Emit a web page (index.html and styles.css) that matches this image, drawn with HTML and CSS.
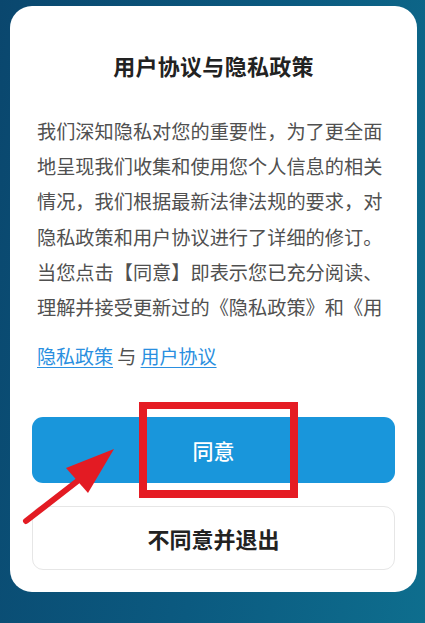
FILE: index.html
```html
<!DOCTYPE html>
<html lang="zh-CN">
<head>
<meta charset="utf-8">
<link rel="stylesheet" href="styles.css">
</head>
<body>
<div class="screen">
  <div class="card">
    <h1 class="title">用户协议与隐私政策</h1>
    <div class="content">我们深知隐私对您的重要性，为了更全面地呈现我们收集和使用您个人信息的相关情况，我们根据最新法律法规的要求，对隐私政策和用户协议进行了详细的修订。当您点击【同意】即表示您已充分阅读、理解并接受更新过的《隐私政策》和《用户协议》，我们将严格按照上述协议为您提供服务。</div>
    <div class="links"><a class="link">隐私政策</a> 与 <a class="link">用户协议</a></div>
    <div class="actions">
      <button class="btn btn-primary">同意</button>
      <button class="btn btn-secondary">不同意并退出</button>
    </div>
  </div>
  <div class="highlight"></div>
  <svg class="arrow" width="425" height="623" viewBox="0 0 425 623">
    <line x1="26" y1="521" x2="84" y2="476" stroke="#e31b23" stroke-width="6" stroke-linecap="round"/>
    <polygon points="114,449 66,468 88,493" fill="#e31b23"/>
  </svg>
</div>
</body>
</html>
```
FILE: styles.css
```css
html, body {
  margin: 0;
  padding: 0;
}
body {
  width: 425px;
  height: 623px;
  overflow: hidden;
  font-family: "Noto Sans CJK SC", "Noto Sans", sans-serif;
}
.screen {
  position: relative;
  width: 425px;
  height: 623px;
  background: linear-gradient(100deg, #0a476e 0%, #0b5a80 55%, #0e6e8e 100%);
  padding: 6px 8px 0 10px;
  box-sizing: border-box;
}
.card {
  width: 407px;
  height: 586px;
  background: #fff;
  border-radius: 22px;
  box-sizing: border-box;
  padding: 44px 22px 22px 22px;
  display: flex;
  flex-direction: column;
}
.title {
  margin: 0;
  text-align: center;
  font-size: 22px;
  line-height: 30px;
  font-weight: 700;
  color: #222;
  letter-spacing: 0.3px;
}
.content {
  margin: 34px 0 0 5px;
  width: 348px;
  height: 210px;
  overflow: hidden;
  font-size: 19.2px;
  line-height: 35.2px;
  color: #505050;
}
.links {
  margin: 18px 0 0 5px;
  font-size: 19px;
  line-height: 35px;
  color: #505050;
}
.link {
  color: #2a8fe0;
  text-decoration: underline;
  text-underline-offset: 3px;
}
.actions {
  margin-top: 44px;
  display: flex;
  flex-direction: column;
  gap: 23px;
}
.btn {
  width: 363px;
  border-radius: 11px;
  font-family: "Noto Sans CJK SC", "Noto Sans", sans-serif;
  font-size: 21px;
  cursor: pointer;
}
.btn-primary {
  height: 66px;
  background: #1996db;
  border: none;
  color: #fff;
  font-weight: 500;
}
.btn-secondary {
  height: 64px;
  background: #fff;
  border: 1.5px solid #e6e6e6;
  color: #222;
  font-weight: 700;
  font-size: 22px;
}
.highlight {
  position: absolute;
  left: 139px;
  top: 402px;
  width: 159px;
  height: 96px;
  box-sizing: border-box;
  border: 8px solid #e51c24;
  border-top-width: 7px;
}
.arrow {
  position: absolute;
  left: 0;
  top: 0;
  pointer-events: none;
}
```
